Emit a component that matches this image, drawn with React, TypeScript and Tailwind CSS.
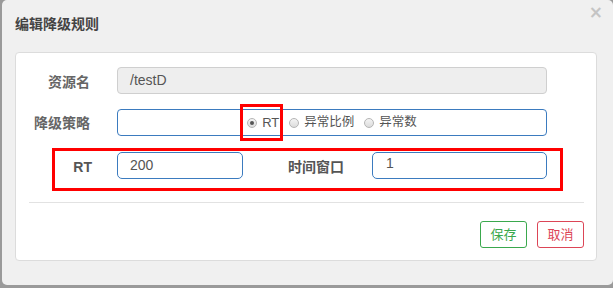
import React from "react";

const font = { fontFamily: '"Liberation Sans", "Noto Sans CJK SC", sans-serif' };

function Radio({ checked, label, size }: { checked?: boolean; label: string; size: string }) {
  return (
    <label className="flex items-center">
      <span className="w-[10px] h-[10px] rounded-full border border-[#b5b5b5] bg-gradient-to-b from-[#f4f4f4] to-[#dcdcdc] flex items-center justify-center">
        {checked && <span className="w-[4px] h-[4px] rounded-full bg-[#555]" />}
      </span>
      <span className={"ml-[5px] text-[#555] " + size}>{label}</span>
    </label>
  );
}

export default function App() {
  return (
    <div className="w-[613px] h-[288px] bg-[#9a9a9a] overflow-hidden" style={font}>
      <div className="ml-[2px] w-[611px] h-[285px] bg-[#f0f0f0] rounded-[5px] relative">
        <div className="h-[52px] flex items-center pl-[13px] pb-[4px]">
          <span className="text-[14px] font-bold text-[#444]">编辑降级规则</span>
        </div>
        <span className="absolute top-[4px] right-[10px] text-[17px] font-bold text-[#c4c4c4] leading-none" style={{ fontFamily: '"DejaVu Sans", sans-serif' }}>×</span>

        <div className="ml-[13px] w-[582px] h-[209px] bg-white border border-[#dcdcdc] rounded-[4px] pl-[13px] pr-[12px] pt-[14px]">
          <div className="flex items-center h-[27px]">
            <div className="w-[61px] text-right text-[14px] font-bold text-[#666] pt-[3px]">资源名</div>
            <div className="ml-[27px] w-[430px] h-[27px] rounded-[4px] border border-[#cfcfcf] bg-[#eeeeee] flex items-center pl-[12px] text-[14px] text-[#555]">/testD</div>
          </div>

          <div className="flex items-center h-[27px] mt-[15px]">
            <div className="w-[61px] text-right text-[14px] font-bold text-[#666] pt-[1px]">降级策略</div>
            <div className="ml-[27px] w-[430px] h-[27px] rounded-[4px] border border-[#3b7bbf] flex items-center justify-center gap-[10px] relative">
              <div className="relative">
                <Radio checked label="RT" size="text-[13px]" />
                <div className="absolute left-[-7px] top-[-9px] w-[43px] h-[37px] border-[3px] border-[#ff0000]" />
              </div>
              <Radio label="异常比例" size="text-[12.5px]" />
              <Radio label="异常数" size="text-[12.5px]" />
            </div>
          </div>

          <div className="relative mt-[16px]">
            <div className="flex items-center h-[27px]">
              <div className="w-[63px] text-right text-[14px] font-bold text-[#555] pt-[3px]">RT</div>
              <div className="ml-[25px] w-[126px] h-[27px] rounded-[5px] border border-[#3b7bbf] flex items-center pl-[12px] text-[14px] text-[#555]">200</div>
              <div className="ml-[45px] text-[14px] font-bold text-[#555] pt-[3px]">时间窗口</div>
              <div className="ml-[28px] w-[175px] h-[27px] rounded-[5px] border border-[#3b7bbf] flex items-center pl-[13px] text-[14px] text-[#555] pb-[4px]">1</div>
            </div>
            <div className="absolute left-[23px] top-[-4px] w-[511px] h-[43px] border-[3px] border-[#ff0000] pointer-events-none" />
          </div>

          <div className="mt-[23px] border-t border-[#e2e2e2]" />

          <div className="flex justify-end gap-[10px] mt-[18px]">
            <button className="w-[47px] h-[27px] rounded-[3px] border border-[#3aa84d] text-[#3aa84d] text-[13px] bg-white">保存</button>
            <button className="w-[47px] h-[27px] rounded-[3px] border border-[#dc4556] text-[#dc4556] text-[13px] bg-white">取消</button>
          </div>
        </div>
      </div>
    </div>
  );
}
